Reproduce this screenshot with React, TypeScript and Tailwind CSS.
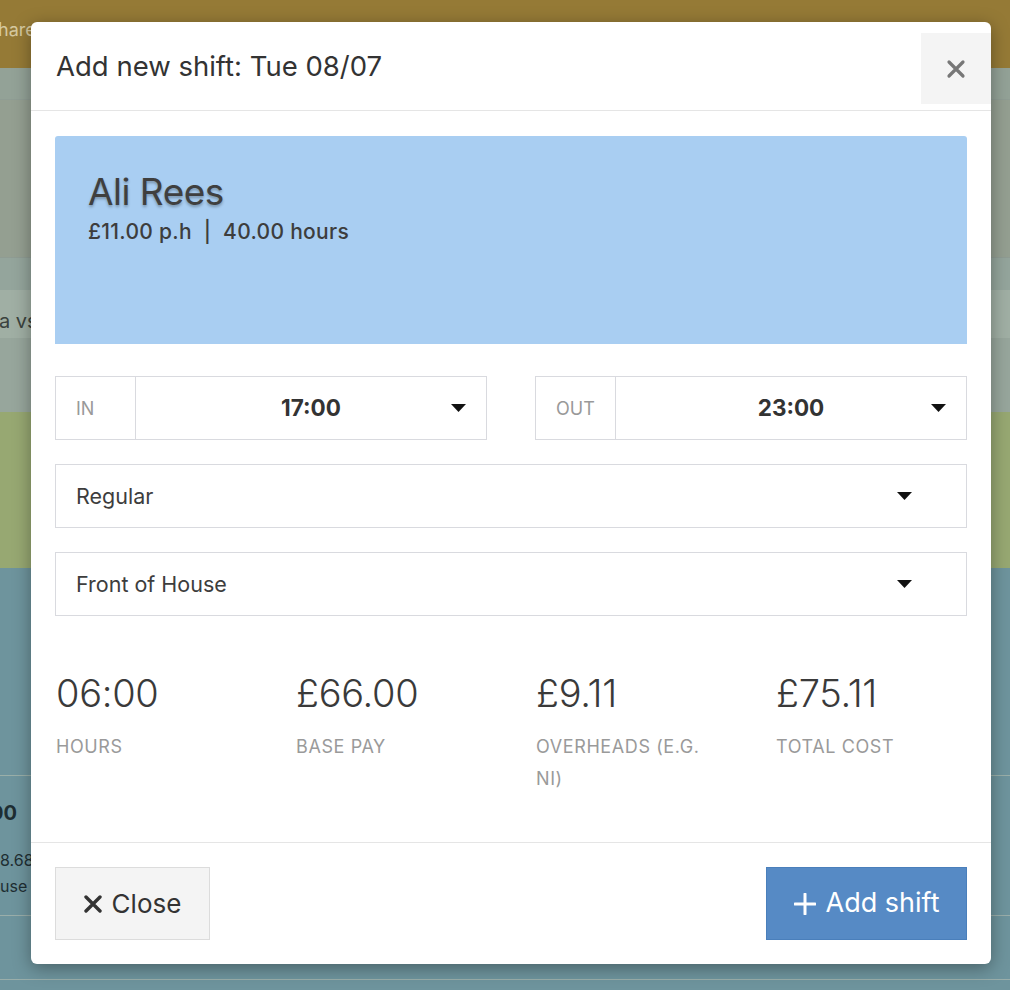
import React from "react";

const Caret = () => (
  <svg width="15" height="8" viewBox="0 0 15 8" className="block">
    <path d="M0 0 L15 0 L7.5 8 Z" fill="#111" />
  </svg>
);

function TimeField({ label, value }: { label: string; value: string }) {
  return (
    <div className="flex h-[64px] flex-1 border border-[#d9dadf] bg-white">
      <div className="flex w-[80px] items-center border-r border-[#d9dadf] pl-[20px] text-[18px] text-[#999]">
        {label}
      </div>
      <div className="relative flex flex-1 items-center justify-center text-[22.5px] font-bold text-[#333]">
        {value}
        <div className="absolute right-[20px] top-[27px]">
          <Caret />
        </div>
      </div>
    </div>
  );
}

function SelectField({ value }: { value: string }) {
  return (
    <div className="flex h-[64px] items-center justify-between border border-[#d9dadf] bg-white pl-[20px] pr-[54px] text-[21.5px] text-[#3d3d3d]">
      <span>{value}</span>
      <Caret />
    </div>
  );
}

function Stat({ value, label }: { value: string; label: string }) {
  return (
    <div className="pr-[50px]">
      <div className="text-[38px] leading-[42px] font-light text-[#3a3a3a] tracking-[-0.3px]">{value}</div>
      <div className="mt-[17px] text-[18px] leading-[32px] uppercase tracking-[0.6px] text-[#9a9a9a]">
        {label}
      </div>
    </div>
  );
}

export default function App() {
  return (
    <div
      className="relative h-[990px] w-[1010px] overflow-hidden"
      style={{ fontFamily: "Inter, 'Noto Sans', sans-serif" }}
    >
      {/* dimmed background page */}
      <div className="flex h-[68px] items-start bg-[#957a36] pt-[16px] text-[18px] text-[#d6c9a0]">
        <span className="-ml-[2px]">hare of availability will be sent</span>
      </div>
      <div className="h-[32px] border-b border-[#8f9d94] bg-[#93a297]" />
      <div className="h-[158px] border-b border-[#8f9c93] bg-[#949f91]" />
      <div className="h-[32px] bg-[#94a59c]" />
      <div className="flex h-[48px] items-center bg-[#a0afa4] text-[20px] text-[#3a423d]">
        <span className="-ml-[1px] mt-[14px]">a vs</span>
      </div>
      <div className="h-[74px] bg-[#97a69c]" />
      <div className="h-[156px] bg-[#97a872]" />
      <div className="h-[208px] border-b border-[#9aafa9] bg-[#6e949d]" />
      <div className="relative h-[140px] border-b border-[#9aaeaa] bg-[#6e949d]">
        <div className="pt-[22px] text-[20px] font-bold text-[#1e2e33]">
          <span className="-ml-[10px]">00</span>
        </div>
        <div className="mt-[20px] text-[16px] text-[#1e2e33]">8.68</div>
        <div className="mt-[2px] text-[16px] text-[#1e2e33]">use</div>
      </div>
      <div className="h-[64px] border-b border-[#9aaeaa] bg-[#6e949d]" />
      <div className="h-[20px] bg-[#6e949d]" />

      {/* modal */}
      <div className="absolute left-[31px] top-[22px] flex h-[942px] w-[960px] flex-col overflow-hidden rounded-[6px] bg-white shadow-[0_4px_18px_rgba(0,0,0,0.35)]">
        <div className="flex h-[89px] shrink-0 items-start justify-between border-b border-[#e5e5e5]">
          <div className="flex h-[89px] items-center pl-[25px] text-[27.5px] text-[#333]">
            Add new shift: Tue 08/07
          </div>
          <div className="mt-[11px] flex h-[71px] w-[70px] items-center justify-center bg-[#f4f4f4]">
            <svg width="20" height="20" viewBox="0 0 20 20">
              <path d="M3 3 L17 17 M17 3 L3 17" stroke="#777" strokeWidth="3.2" strokeLinecap="round" />
            </svg>
          </div>
        </div>

        <div className="flex-1 pt-[25px]">
          <div className="mx-[24px] h-[208px] rounded-t-[3px] bg-[#a9cef2] pl-[33px] pt-[34px]">
            <div
              className="text-[37px] leading-[44px] text-[#3f3f3f] tracking-[-0.5px]"
              style={{ textShadow: "0 2px 3px rgba(0,0,0,0.3)" }}
            >
              Ali Rees
            </div>
            <div className="mt-[2px] text-[21px] font-medium tracking-[0.3px] text-[#3d3d3d]">
              £11.00 p.h&nbsp;&nbsp;|&nbsp;&nbsp;40.00 hours
            </div>
          </div>

          <div className="mx-[24px] mt-[32px] flex gap-[48px]">
            <TimeField label="IN" value="17:00" />
            <TimeField label="OUT" value="23:00" />
          </div>

          <div className="mx-[24px] mt-[24px]">
            <SelectField value="Regular" />
          </div>
          <div className="mx-[24px] mt-[24px]">
            <SelectField value="Front of House" />
          </div>

          <div className="mt-[56px] grid grid-cols-[repeat(4,240px)] pl-[25px]">
            <Stat value="06:00" label="Hours" />
            <Stat value="£66.00" label="Base pay" />
            <Stat value="£9.11" label="Overheads (e.g. NI)" />
            <Stat value="£75.11" label="Total cost" />
          </div>
        </div>

        <div className="flex h-[122px] shrink-0 items-start justify-between border-t border-[#e5e5e5] px-[24px] pt-[24px]">
          <button className="flex h-[73px] w-[155px] items-center justify-center gap-[10px] border border-[#dcdcdc] bg-[#f4f4f4] text-[26px] text-[#333]">
            <svg width="18" height="18" viewBox="0 0 18 18">
              <path d="M2 2 L16 16 M16 2 L2 16" stroke="#333" strokeWidth="3.4" strokeLinecap="round" />
            </svg>
            Close
          </button>
          <button className="flex h-[73px] w-[201px] items-center justify-center gap-[10px] border border-[#4a7fbb] bg-[#568ac5] text-[27px] text-white">
            <svg width="22" height="22" viewBox="0 0 22 22">
              <path d="M11 1 L11 21 M1 11 L21 11" stroke="#fff" strokeWidth="3" strokeLinecap="round" />
            </svg>
            Add shift
          </button>
        </div>
      </div>
    </div>
  );
}
